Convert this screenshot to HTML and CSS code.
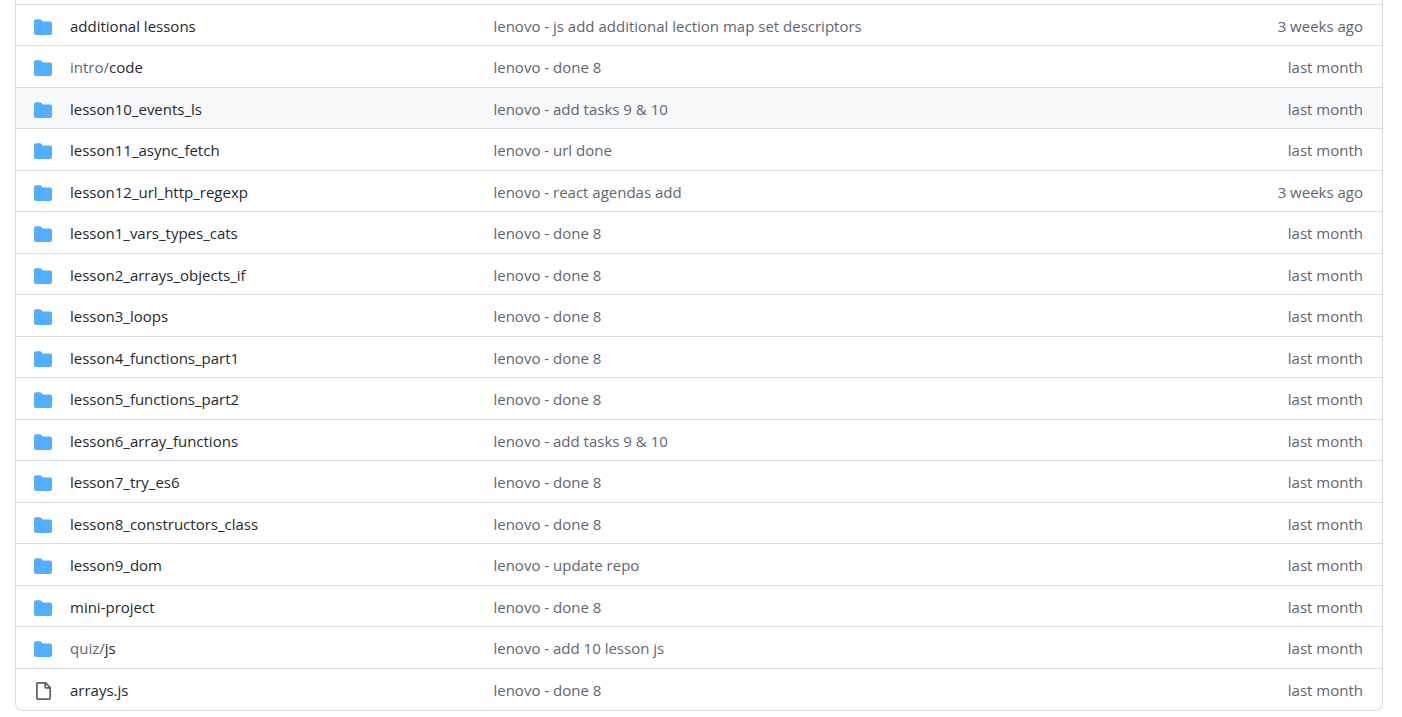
FILE: index.html
```html
<!DOCTYPE html>
<html lang="en">
<head>
<meta charset="utf-8">
<title>Files</title>
<link rel="stylesheet" href="styles.css">
</head>
<body>
<svg class="sprite" aria-hidden="true">
  <symbol id="folder" viewBox="0 0 16 16"><path d="M1.75 1A1.75 1.75 0 000 2.75v10.5C0 14.216.784 15 1.75 15h12.5A1.75 1.75 0 0016 13.25v-8.5A1.75 1.75 0 0014.25 3h-6.5a.25.25 0 01-.2-.1l-.9-1.2c-.33-.44-.85-.7-1.4-.7h-3.5z"/></symbol>
  <symbol id="file" viewBox="0 0 18 18"><path fill="none" stroke="currentColor" stroke-width="1.7" stroke-linejoin="round" d="M4 .9h7.6l4.6 4.6V16a1.1 1.1 0 01-1.1 1.1H4A1.1 1.1 0 012.900 16V2A1.1 1.1 0 014 .9zM11.200 1v3.900a1 1 0 001 1h3.900"/></symbol>
</svg>
<main class="files">
  <table class="file-table" aria-label="Files">
    <tbody>
      <tr><td class="icon"><svg><use href="#folder"/></svg></td><td class="name"><a href="#">additional lessons</a></td><td class="message"><a href="#">lenovo - js add additional lection map set descriptors</a></td><td class="age">3 weeks ago</td></tr>
      <tr><td class="icon"><svg><use href="#folder"/></svg></td><td class="name"><a href="#"><span class="parent">intro/</span>code</a></td><td class="message"><a href="#">lenovo - done 8</a></td><td class="age">last month</td></tr>
      <tr class="active"><td class="icon"><svg><use href="#folder"/></svg></td><td class="name"><a href="#">lesson10_events_ls</a></td><td class="message"><a href="#">lenovo - add tasks 9 &amp; 10</a></td><td class="age">last month</td></tr>
      <tr><td class="icon"><svg><use href="#folder"/></svg></td><td class="name"><a href="#">lesson11_async_fetch</a></td><td class="message"><a href="#">lenovo - url done</a></td><td class="age">last month</td></tr>
      <tr><td class="icon"><svg><use href="#folder"/></svg></td><td class="name"><a href="#">lesson12_url_http_regexp</a></td><td class="message"><a href="#">lenovo - react agendas add</a></td><td class="age">3 weeks ago</td></tr>
      <tr><td class="icon"><svg><use href="#folder"/></svg></td><td class="name"><a href="#">lesson1_vars_types_cats</a></td><td class="message"><a href="#">lenovo - done 8</a></td><td class="age">last month</td></tr>
      <tr><td class="icon"><svg><use href="#folder"/></svg></td><td class="name"><a href="#">lesson2_arrays_objects_if</a></td><td class="message"><a href="#">lenovo - done 8</a></td><td class="age">last month</td></tr>
      <tr><td class="icon"><svg><use href="#folder"/></svg></td><td class="name"><a href="#">lesson3_loops</a></td><td class="message"><a href="#">lenovo - done 8</a></td><td class="age">last month</td></tr>
      <tr><td class="icon"><svg><use href="#folder"/></svg></td><td class="name"><a href="#">lesson4_functions_part1</a></td><td class="message"><a href="#">lenovo - done 8</a></td><td class="age">last month</td></tr>
      <tr><td class="icon"><svg><use href="#folder"/></svg></td><td class="name"><a href="#">lesson5_functions_part2</a></td><td class="message"><a href="#">lenovo - done 8</a></td><td class="age">last month</td></tr>
      <tr><td class="icon"><svg><use href="#folder"/></svg></td><td class="name"><a href="#">lesson6_array_functions</a></td><td class="message"><a href="#">lenovo - add tasks 9 &amp; 10</a></td><td class="age">last month</td></tr>
      <tr><td class="icon"><svg><use href="#folder"/></svg></td><td class="name"><a href="#">lesson7_try_es6</a></td><td class="message"><a href="#">lenovo - done 8</a></td><td class="age">last month</td></tr>
      <tr><td class="icon"><svg><use href="#folder"/></svg></td><td class="name"><a href="#">lesson8_constructors_class</a></td><td class="message"><a href="#">lenovo - done 8</a></td><td class="age">last month</td></tr>
      <tr><td class="icon"><svg><use href="#folder"/></svg></td><td class="name"><a href="#">lesson9_dom</a></td><td class="message"><a href="#">lenovo - update repo</a></td><td class="age">last month</td></tr>
      <tr><td class="icon"><svg><use href="#folder"/></svg></td><td class="name"><a href="#">mini-project</a></td><td class="message"><a href="#">lenovo - done 8</a></td><td class="age">last month</td></tr>
      <tr><td class="icon"><svg><use href="#folder"/></svg></td><td class="name"><a href="#"><span class="parent">quiz/</span>js</a></td><td class="message"><a href="#">lenovo - add 10 lesson js</a></td><td class="age">last month</td></tr>
      <tr><td class="icon file"><svg><use href="#file"/></svg></td><td class="name"><a href="#">arrays.js</a></td><td class="message"><a href="#">lenovo - done 8</a></td><td class="age">last month</td></tr>
    </tbody>
  </table>
</main>
</body>
</html>
```
FILE: styles.css
```css
* {
  box-sizing: border-box;
}

body {
  margin: 0;
  background: #fff;
  color: #24292e;
  font: 15px/20px "Segoe UI", "Open Sans", "Noto Sans", sans-serif;
}

.sprite {
  display: none;
}

.files {
  margin: 0 19px 0 15px;
  padding-top: 4px;
  border: 1px solid #d5dae1;
  border-top: 0;
  border-radius: 0 0 8px 8px;
  overflow: hidden;
}

.file-table {
  width: 100%;
  border-spacing: 0;
  table-layout: fixed;
}

td {
  height: 41px;
  padding: 1px 0 0;
  border-top: 1px solid #d9dee4;
  vertical-align: middle;
  white-space: nowrap;
}

tr:nth-child(even) td,
tr:last-child td {
  height: 42px;
}

.active,
tr:hover {
  background: #f6f8fa;
}

a {
  color: inherit;
  text-decoration: none;
}

a:hover {
  text-decoration: underline;
}

.icon {
  width: 54px;
  padding: 3px 0 0 18px;
}

.icon svg {
  display: block;
  width: 18px;
  height: 18px;
  fill: #54aeff;
}

.icon.file {
  color: #57606a;
}

.name {
  width: 31%;
}

.parent,
.message,
.age {
  color: #5f6671;
}

.age {
  width: 150px;
  padding-right: 19px;
  text-align: right;
}
```
